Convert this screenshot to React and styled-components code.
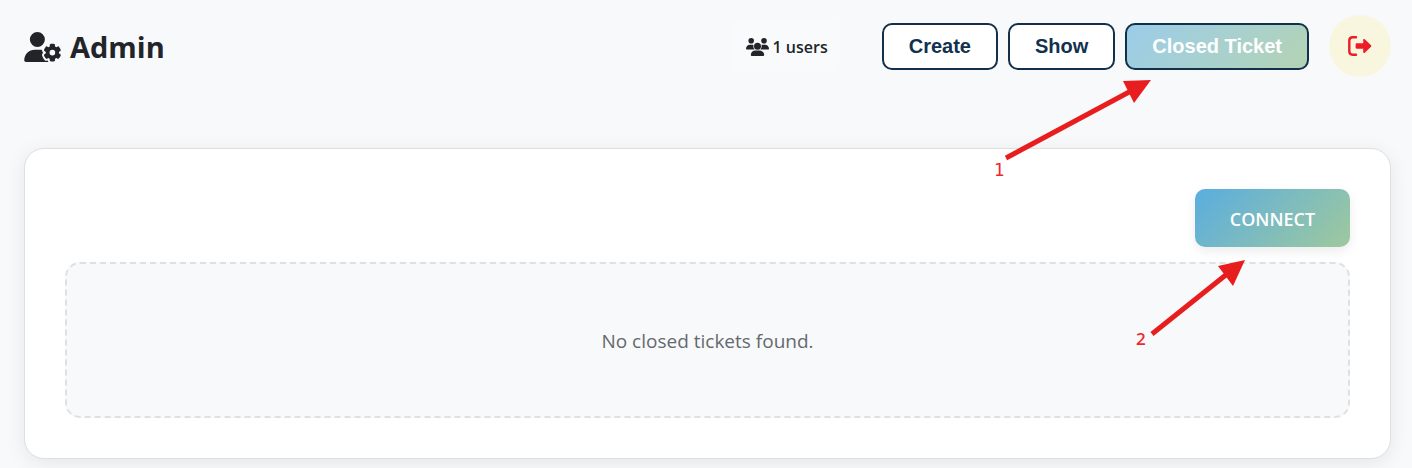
import React from 'react';
import styled, { createGlobalStyle } from 'styled-components';
import { FaUserGear } from 'react-icons/fa6';

const GlobalStyle = createGlobalStyle`
  *, *::before, *::after { box-sizing: border-box; }
  body {
    margin: 0;
    background: #f8f9fb;
    color: #212529;
    font-family: "Segoe UI", "Open Sans", "Noto Sans", sans-serif;
  }
`;

const Page = styled.div`
  position: relative;
  padding: 15px 21px 9px 24px;
`;

const Header = styled.header`
  display: flex;
  align-items: center;
  height: 62px;
`;

const Title = styled.h1`
  display: flex;
  align-items: center;
  gap: 8px;
  margin: 0 auto 0 0;
  padding-top: 2px;
  font-size: 29px;
  line-height: 36px;
  font-weight: 700;

  svg { width: 38px; height: 30px; }
`;

const UserCount = styled.div`
  display: flex;
  align-items: center;
  gap: 4px;
  padding: 15px 12px 13px 15px;
  border-radius: 10px;
  background: #f9fafc;
  font-size: 16px;
  line-height: 24px;
  font-weight: 600;
`;

const Nav = styled.nav`
  display: flex;
  gap: 10px;
  margin: 0 20px 0 42px;
`;

const NavButton = styled.button`
  height: 47px;
  padding: 0 25px;
  border: 2px solid #12304a;
  border-radius: 10px;
  background: ${({ $active }) => ($active ? 'linear-gradient(135deg, #9bcdea, #b4d3b4)' : '#fff')};
  color: ${({ $active }) => ($active ? '#fff' : '#12304f')};
  font: 700 20px/24px "Liberation Sans", Arial, sans-serif;
  white-space: nowrap;
`;

const LogoutButton = styled.button`
  display: grid;
  place-items: center;
  width: 62px;
  height: 62px;
  padding: 0;
  border: 0;
  border-radius: 50%;
  background: #f9f6df;
  color: #ee1c25;
`;

const Card = styled.main`
  display: flex;
  flex-direction: column;
  margin-top: 71px;
  padding: 40px;
  border: 1px solid #dedfe0;
  border-radius: 20px;
  background: #fff;
  box-shadow: 0 4px 20px rgba(0, 0, 0, 0.08);
`;

const ConnectButton = styled.button`
  align-self: flex-end;
  width: 155px;
  height: 58px;
  padding: 2px 0 0;
  border: 0;
  border-radius: 10px;
  background: linear-gradient(135deg, #5aade0, #9fc99d);
  box-shadow: 0 4px 12px rgba(0, 0, 0, 0.08);
  color: #fff;
  font: 600 18px/24px "Segoe UI", "Open Sans", "Noto Sans", sans-serif;
`;

const EmptyState = styled.p`
  margin: 15px 0 0;
  padding: 63px 20px 61px;
  border: 2px dashed #dfe0e2;
  border-radius: 15px;
  background: #f8f9fb;
  color: #64696e;
  font-size: 19px;
  line-height: 28px;
  text-align: center;
`;

const Annotations = styled.svg`
  position: absolute;
  top: 0;
  right: 0;
  width: 432px;
  height: 360px;
  pointer-events: none;
  fill: #e81e1e;
  stroke: none;

  line { stroke: #e81e1e; stroke-width: 5px; }
`;

const StepLabel = styled.text`
  fill: #f0282d;
  font-family: ${({ $family }) => $family};
  font-size: 17px;
  font-weight: ${({ $weight }) => $weight};
`;

function UsersIcon() {
  return (
    <svg width="23" height="18" viewBox="0 0 23 18" fill="currentColor" aria-hidden="true">
      <circle cx="5.2" cy="2.8" r="2.8" />
      <circle cx="18" cy="2.8" r="2.8" />
      <circle cx="11.5" cy="8.2" r="3.5" />
      <path d="M.7 11.5C.3 11.5 0 11.2 0 10.8 0 8.4 1.7 6.7 3.8 6.7h2.4c.5 0 .9.1 1.3.3-.4 1.6 0 3.3 1 4.5z" />
      <path d="M22.3 11.5c.4 0 .7-.3.7-.7 0-2.4-1.7-4.1-3.8-4.1h-2.4c-.5 0-.9.1-1.3.3.4 1.6 0 3.3-1 4.5z" />
      <path d="M4.8 17.1c0-2.8 2-4.7 4.6-4.7h4.2c2.6 0 4.6 1.9 4.6 4.7 0 .5-.4.9-.9.9H5.7c-.5 0-.9-.4-.9-.9z" />
    </svg>
  );
}

function LogoutIcon() {
  return (
    <svg width="24" height="20" viewBox="0 0 24 20" aria-hidden="true">
      <path
        d="M8 1.3H4.7C2.7 1.3 1.3 2.7 1.3 4.7v10.6c0 2 1.4 3.4 3.4 3.4H8"
        fill="none" stroke="currentColor" strokeWidth="2.4" strokeLinecap="round"
      />
      <path
        d="M8.8 7.3h6.4V4c0-.9 1-1.3 1.6-.7l6.2 5.9c.5.5.5 1.1 0 1.6l-6.2 5.9c-.6.6-1.6.2-1.6-.7v-3.3H8.8c-.7 0-1.2-.5-1.2-1.2v-3c0-.7.5-1.2 1.2-1.2z"
        fill="currentColor"
      />
    </svg>
  );
}

export default function App() {
  return (
    <Page>
      <GlobalStyle />
      <Header>
        <Title><FaUserGear aria-hidden="true" />Admin</Title>
        <UserCount><UsersIcon />1 users</UserCount>
        <Nav>
          <NavButton type="button">Create</NavButton>
          <NavButton type="button">Show</NavButton>
          <NavButton type="button" $active>Closed Ticket</NavButton>
        </Nav>
        <LogoutButton type="button" aria-label="Log out"><LogoutIcon /></LogoutButton>
      </Header>
      <Card>
        <ConnectButton type="button">CONNECT</ConnectButton>
        <EmptyState>No closed tickets found.</EmptyState>
      </Card>
      <Annotations viewBox="0 0 432 360">
        <line x1="26" y1="158" x2="151" y2="91" />
        <polygon points="143,81 171,80 154,103" />
        <StepLabel x="14" y="176" $family='"DejaVu Sans", sans-serif' $weight={400}>1</StepLabel>
        <line x1="172" y1="334" x2="247" y2="274" />
        <polygon points="238,266 265,260 253,286" />
        <StepLabel x="156" y="345" $family='"Open Sans", sans-serif' $weight={600}>2</StepLabel>
      </Annotations>
    </Page>
  );
}
